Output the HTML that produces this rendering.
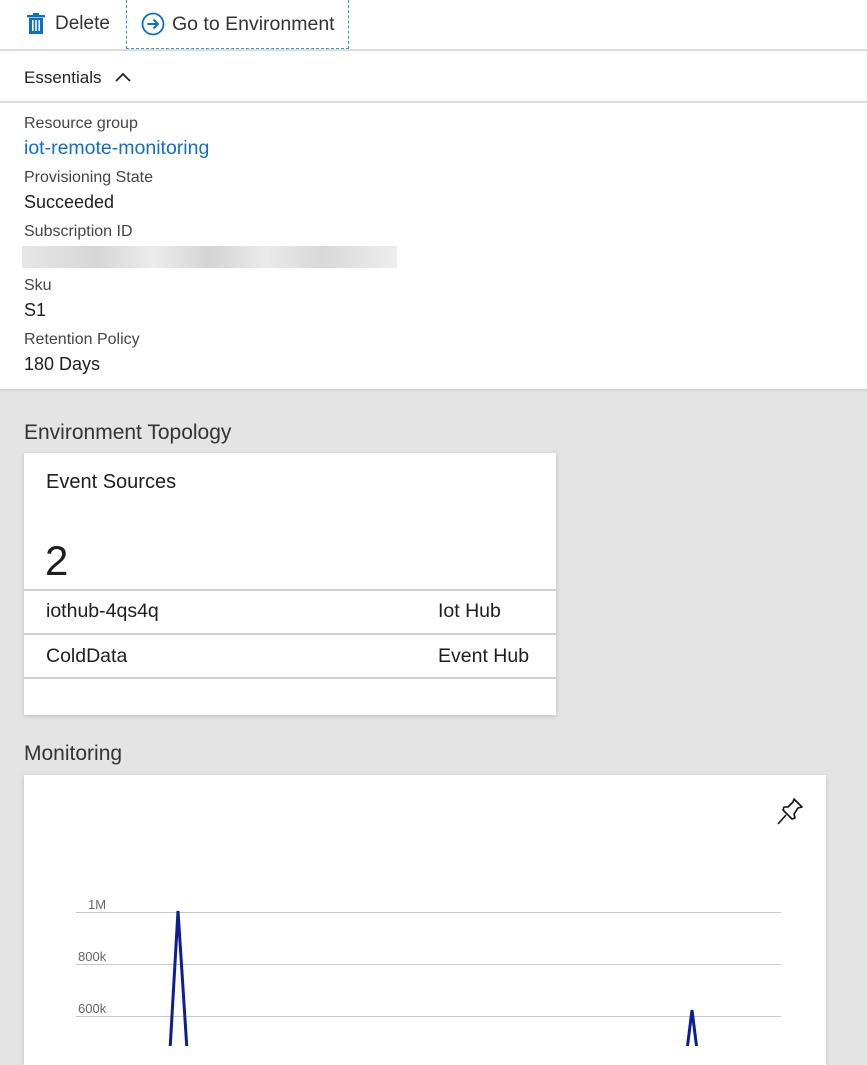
<!DOCTYPE html>
<html><head><meta charset="utf-8"><style>
*{margin:0;padding:0;box-sizing:border-box}
body{width:867px;height:1046px;overflow:hidden;background:#e4e4e4;font-family:"Segoe UI","Liberation Sans",sans-serif;color:#1e1e1e;position:relative}
.abs{position:absolute;white-space:nowrap}
.white{position:absolute;left:0;top:0;width:867px;height:391px;background:#fff;border-bottom:2px solid #d6d6d6}
.lbl{font-size:16px;color:#444}
.val{font-size:18px;color:#1e1e1e}
.hl{position:absolute;left:0;width:867px;height:2px;background:#dcdcdc}
.card{position:absolute;background:#fff;box-shadow:0 1px 4px rgba(0,0,0,.18)}
.row{position:absolute;left:0;width:532px;height:2px;background:#d0d0d0}
.grid{position:absolute;left:76px;width:705px;height:1px;background:#c8c8c8}
.ax{font-size:13px;color:#666}
.r{font-size:19.5px}
</style></head><body>
<div class="white"></div>
<svg class="abs" style="left:27px;top:13px" width="18" height="21" viewBox="0 0 18 21"><rect x="0" y="2" width="18" height="2.4" fill="#0f6fc6"/><rect x="6" y="0" width="6" height="3" fill="#0f6fc6"/><rect x="2" y="5" width="14" height="16" fill="#0f6fc6"/><rect x="5" y="7" width="1.6" height="11" fill="#fff"/><rect x="8.2" y="7" width="1.6" height="11" fill="#fff"/><rect x="11.4" y="7" width="1.6" height="11" fill="#fff"/></svg>
<div class="abs" style="left:55px;top:13px;font-size:19px;color:#333">Delete</div>
<div class="abs" style="left:126px;top:0;width:223px;height:49px;border:1px dashed #1aa3e0;border-top:none"></div>
<svg class="abs" style="left:141px;top:12px" width="24" height="24" viewBox="0 0 24 24"><circle cx="12" cy="12" r="10.5" fill="none" stroke="#0f6fc6" stroke-width="1.8"/><path d="M6.5 12H17M12.5 7.5L17 12L12.5 16.5" fill="none" stroke="#0f6fc6" stroke-width="2"/></svg>
<div class="abs" style="left:172px;top:13px;font-size:19.5px;color:#333">Go to Environment</div>
<div class="hl" style="top:49px"></div>
<div class="abs" style="left:24px;top:68px;font-size:17px;color:#222">Essentials</div>
<svg class="abs" style="left:115px;top:72px" width="16" height="10" viewBox="0 0 16 10"><path d="M1 9L8 2L15 9" fill="none" stroke="#222" stroke-width="1.8"/></svg>
<div class="hl" style="top:101px"></div>
<div class="abs lbl" style="left:24px;top:115px">Resource group</div>
<div class="abs val" style="left:24px;top:137px;color:#0f6fc6;font-size:19.5px">iot-remote-monitoring</div>
<div class="abs lbl" style="left:24px;top:169px">Provisioning State</div>
<div class="abs val" style="left:24px;top:192px">Succeeded</div>
<div class="abs lbl" style="left:24px;top:223px">Subscription ID</div>
<div class="abs" style="left:22px;top:246px;width:375px;height:22px;background:linear-gradient(90deg,#e6e6e6,#d6d6d6 20%,#ececec 35%,#d4d4d4 50%,#eaeaea 65%,#d8d8d8 80%,#eeeeee)"></div>
<div class="abs lbl" style="left:24px;top:277px">Sku</div>
<div class="abs val" style="left:24px;top:300px">S1</div>
<div class="abs lbl" style="left:24px;top:331px">Retention Policy</div>
<div class="abs val" style="left:24px;top:354px">180 Days</div>

<div class="abs" style="left:24px;top:421px;font-size:21px;color:#333">Environment Topology</div>
<div class="card" style="left:24px;top:453px;width:532px;height:262px">
  <div class="abs" style="left:22px;top:18px;font-size:20px">Event Sources</div>
  <div class="abs" style="left:21px;top:83px;font-size:42px;line-height:50px">2</div>
  <div class="row" style="top:136px"></div>
  <div class="abs r" style="left:22px;top:147px">iothub-4qs4q</div>
  <div class="abs r" style="left:414px;top:147px">Iot Hub</div>
  <div class="row" style="top:180px"></div>
  <div class="abs r" style="left:22px;top:192px">ColdData</div>
  <div class="abs r" style="left:414px;top:192px">Event Hub</div>
  <div class="row" style="top:224px"></div>
</div>

<div class="abs" style="left:24px;top:742px;font-size:21px;color:#333">Monitoring</div>
<div class="card" style="left:24px;top:775px;width:802px;height:290px"></div>
<svg class="abs" style="left:776px;top:797px" width="28" height="30" viewBox="0 0 28 30"><path d="M18 2L26 10L22 11L18 17L19 21L16 22L7 13L8 10L12 10L17 5Z M10 18L2 27" fill="none" stroke="#111" stroke-width="1.6" stroke-linejoin="round"/></svg>
<div class="grid" style="top:912px"></div>
<div class="grid" style="top:964px"></div>
<div class="grid" style="top:1016px"></div>
<div class="abs ax" style="left:88px;top:897px">1M</div>
<div class="abs ax" style="left:78px;top:949px">800k</div>
<div class="abs ax" style="left:78px;top:1001px">600k</div>
<svg class="abs" style="left:0;top:0" width="867" height="1046"><polyline points="170,1050 178,911 187,1050" fill="none" stroke="#0a1f96" stroke-width="3"/><polyline points="687,1050 692,1010 697,1050" fill="none" stroke="#0a1f96" stroke-width="3"/></svg>
</body></html>
